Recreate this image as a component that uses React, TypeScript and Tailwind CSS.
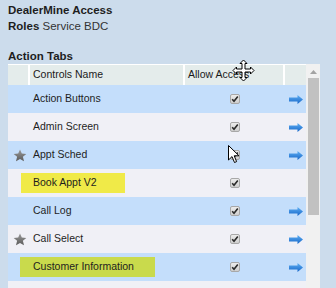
import React from 'react';

interface RowData {
    name: string;
    star?: boolean;
    arrow?: boolean;
    mark?: 'yellow' | 'green';
}

const rows: RowData[] = [
    { name: 'Action Buttons', arrow: true },
    { name: 'Admin Screen', arrow: true },
    { name: 'Appt Sched', star: true, arrow: true },
    { name: 'Book Appt V2', mark: 'yellow' },
    { name: 'Call Log', arrow: true },
    { name: 'Call Select', star: true, arrow: true },
    { name: 'Customer Information', arrow: true, mark: 'green' },
    { name: '' },
];

const Star = () => (
    <svg width="14" height="13" viewBox="0 0 14 13">
        <defs>
            <linearGradient id="starg" x1="0" y1="0" x2="0" y2="1">
                <stop offset="0" stopColor="#9a9a9a" />
                <stop offset="1" stopColor="#5a5a5a" />
            </linearGradient>
        </defs>
        <path d="M7 0.5 L8.8 4.6 L13.3 4.9 L9.9 7.8 L11 12.3 L7 9.9 L3 12.3 L4.1 7.8 L0.7 4.9 L5.2 4.6 Z" fill="url(#starg)" />
    </svg>
);

const Arrow = () => (
    <svg width="14" height="9" viewBox="0 0 14 9">
        <defs>
            <linearGradient id="arrg" x1="0" y1="0" x2="0" y2="1">
                <stop offset="0" stopColor="#5fb0f4" />
                <stop offset="1" stopColor="#1565c8" />
            </linearGradient>
        </defs>
        <path d="M0 2.5 H8.5 V0 L14 4.5 L8.5 9 V6.5 H0 Z" fill="url(#arrg)" />
    </svg>
);

const Check = () => (
    <div className="w-[10px] h-[10px] rounded-[2px] border border-[#a8a8a8] bg-gradient-to-b from-[#ececec] to-[#cfcfcf] flex items-center justify-center">
        <svg width="8" height="8" viewBox="0 0 8 8">
            <path d="M1.2 4.2 L3 6.2 L6.8 1.4" fill="none" stroke="#2a2a2a" strokeWidth="1.6" />
        </svg>
    </div>
);

const MoveCursor = () => (
    <svg width="23" height="23" viewBox="0 0 23 23" className="absolute left-[232px] top-[59px]">
        <path
            d="M11.5 1 L15 4.5 L13 4.5 L13 10 L18.5 10 L18.5 8 L22 11.5 L18.5 15 L18.5 13 L13 13 L13 18.5 L15 18.5 L11.5 22 L8 18.5 L10 18.5 L10 13 L4.5 13 L4.5 15 L1 11.5 L4.5 8 L4.5 10 L10 10 L10 4.5 L8 4.5 Z"
            fill="#fff"
            stroke="#000"
            strokeWidth="1"
        />
    </svg>
);

const PointerCursor = () => (
    <svg width="12" height="19" viewBox="0 0 12 19" className="absolute left-[228px] top-[145px]">
        <path d="M0.5 0.5 L0.5 15 L4 11.6 L6.5 17.5 L8.6 16.6 L6.2 10.8 L11 10.8 Z" fill="#fff" stroke="#000" strokeWidth="1" />
    </svg>
);

const Row: React.FC<{ row: RowData; index: number }> = ({ row, index }) => {
    const bg = index % 2 === 0 ? 'bg-[#c4defb]' : 'bg-[#f0f0f6]';
    return (
        <div className={`flex h-[28px] items-center ${bg}`}>
            <div className="w-[22px] flex items-center justify-center pl-[2px]">{row.star && <Star />}</div>
            <div className="w-[155px] flex items-center pl-[3px]">
                {row.mark === 'yellow' && (
                    <span className="-ml-[12px] pl-[12px] pr-[28px] h-[20px] flex items-center bg-[#f0ea48]">{row.name}</span>
                )}
                {row.mark === 'green' && (
                    <span className="-ml-[13px] pl-[13px] pr-[21px] h-[20px] flex items-center bg-[#c9da4c]">{row.name}</span>
                )}
                {!row.mark && <span>{row.name}</span>}
            </div>
            <div className="w-[100px] flex justify-center">{row.name && <Check />}</div>
            <div className="w-[21px] flex justify-center">{row.arrow && <Arrow />}</div>
        </div>
    );
};

export default function App() {
    return (
        <div
            className="relative w-[336px] h-[288px] overflow-hidden bg-[#ccdcec] text-[#1e1e1e]"
            style={{ fontFamily: '"Liberation Sans", Arial, sans-serif' }}
        >
            <div className="pl-[8px] pt-[3px]">
                <div className="text-[11.5px] leading-[14px] font-bold">DealerMine Access</div>
                <div className="text-[11.5px] leading-[14px] mt-[2px]">
                    <span className="font-bold">Roles</span> <span className="text-[#333]">Service BDC</span>
                </div>
                <div className="text-[11.5px] leading-[14px] font-bold mt-[16px]">Action Tabs</div>
            </div>
            <div className="flex mt-[1px] pl-[8px]">
                <div className="w-[298px] text-[10.5px]">
                    <div className="flex h-[21px] items-center bg-[#e4eceb] border-t border-white text-[#1a1a1a]">
                        <div className="w-[22px] h-full border-r-2 border-white" />
                        <div className="w-[155px] h-full flex items-center pl-[3px] border-r-2 border-white">Controls Name</div>
                        <div className="w-[100px] h-full flex items-center pl-[3px] border-r-2 border-white">Allow Access</div>
                        <div className="w-[21px] h-full" />
                    </div>
                    {rows.map((row, i) => (
                        <Row key={i} row={row} index={i} />
                    ))}
                </div>
                <div className="w-[14px] h-[224px] bg-[#f1f1f1] flex flex-col items-center">
                    <svg width="7" height="4" viewBox="0 0 7 4" className="mt-[6px]">
                        <path d="M0 4 L3.5 0 L7 4 Z" fill="#a3a3a3" />
                    </svg>
                    <div className="mt-[4px] w-[11px] h-[137px] bg-[#c1c1c1]" />
                </div>
            </div>
            <MoveCursor />
            <PointerCursor />
        </div>
    );
}
